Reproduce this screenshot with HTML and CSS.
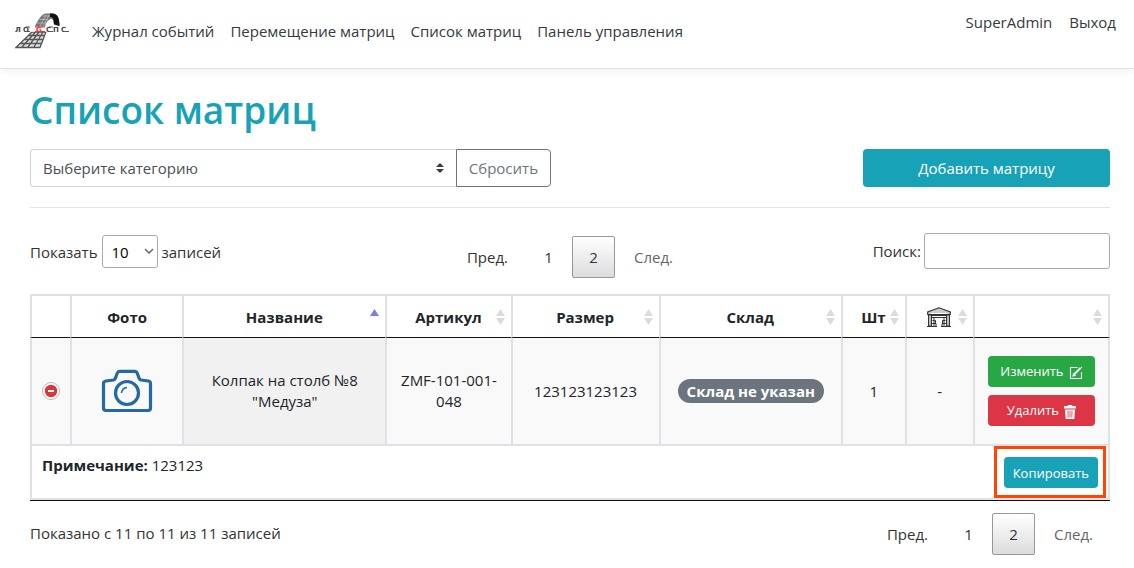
FILE: index.html
```html
<!DOCTYPE html>
<html lang="ru">
<head>
<meta charset="utf-8">
<meta name="viewport" content="width=device-width, initial-scale=1">
<title>Список матриц</title>
<link rel="stylesheet" href="styles.css">
</head>
<body>
<svg class="sprite" aria-hidden="true">
  <symbol id="sort" viewBox="0 0 9 16"><path d="M4.500 0 9 7H0zM0 9h9L4.500 16z" fill="#dcdcdc"/></symbol>
</svg>
<header class="navbar">
  <a class="logo" href="#" aria-label="Главная">
    <svg width="54" height="36" viewBox="0 0 54 36">
      <path d="M20 13C24 5 27 1 31 .5H38C43 1 44.500 6 44.500 13L39 12C38.500 7 37 5 35.500 6C32 8 31 10 30 14H20z" fill="#777"/>
      <path d="M35 .5H38C43 1 44.500 6 44.500 13L39 11C39 6 38 4 35 4z" fill="#111"/>
      <path d="M22 10H31M24.500 6.500H33M28 3H35M25 13 31 2M28.500 13 34 2" stroke="#ccc" stroke-width=".6" fill="none"/>
      <path d="M17 19H31L25 34H1z" fill="#ddd"/>
      <path d="M17 19H31L25 34.500H1zM14 22.500H29.500M10 26.500H28M5 30.500H26.500M20.500 19 7 34M24 19 13 34M28 19 19 34" stroke="#555" stroke-width="1.300" fill="none"/>
      <path d="M0 13.500H54V19H0z" fill="#fff" opacity=".75"/>
      <g class="logo-text"><text x="0" y="19">Л</text><text x="8" y="19">О</text><text class="logo-red" x="21" y="19">G</text><text x="31" y="19">С</text><text x="38" y="19">П</text><text x="46" y="19">С</text></g>
      <path d="M11 14h4M11 18.500h4M34 14h4M34 18.500h4M49 18.500h5" stroke="#555"/>
      <path d="M20 14h10M20 18.500h10" stroke="#e33" stroke-width="1.200"/>
    </svg>
  </a>
  <nav class="menu">
    <a href="#">Журнал событий</a>
    <a href="#">Перемещение матриц</a>
    <a href="#">Список матриц</a>
    <a href="#">Панель управления</a>
  </nav>
  <div class="account"><span>SuperAdmin</span><a href="#">Выход</a></div>
</header>

<main class="page">
  <h1 class="title">Список матриц</h1>
  <div class="toolbar">
    <div class="filter">
      <div class="select-wrap category">
        <select class="category-select" aria-label="Категория"><option>Выберите категорию</option></select>
        <svg class="category-arrow" width="8" height="10" viewBox="0 0 8 10"><path d="M4 0 8 4H0zM0 6h8L4 10z" fill="#343a40"/></svg>
      </div>
      <button class="btn-reset" type="button">Сбросить</button>
    </div>
    <button class="btn btn-add" type="button">Добавить матрицу</button>
  </div>

  <div class="controls">
    <div class="length">
      <label for="length">Показать</label>
      <div class="select-wrap">
        <select id="length" class="length-select"><option>10</option></select>
        <svg class="length-arrow" width="10" height="6" viewBox="0 0 10 6"><path d="M1 1l4 4 4-4" fill="none" stroke="#666" stroke-width="1.500"/></svg>
      </div>
      <label for="length">записей</label>
    </div>
    <nav class="pager" aria-label="Страницы сверху">
      <a href="#">Пред.</a><a href="#">1</a><a class="current" href="#">2</a><a class="disabled" href="#">След.</a>
    </nav>
    <div class="search"><label for="search">Поиск:</label><input id="search" type="search"></div>
  </div>

  <table class="grid">
    <colgroup><col class="c-toggle"><col class="c-photo"><col class="c-name"><col class="c-code"><col class="c-size"><col class="c-store"><col class="c-qty"><col class="c-garage"><col class="c-actions"></colgroup>
    <thead>
      <tr>
        <th></th>
        <th>Фото</th>
        <th class="sortable">Название<svg class="sort sort-asc" viewBox="0 0 9 16"><path d="M4.500 0 9 7H0z" fill="#7b7fdc"/></svg></th>
        <th class="sortable">Артикул<svg class="sort"><use href="#sort"/></svg></th>
        <th class="sortable">Размер<svg class="sort"><use href="#sort"/></svg></th>
        <th class="sortable">Склад<svg class="sort"><use href="#sort"/></svg></th>
        <th class="sortable">Шт<svg class="sort"><use href="#sort"/></svg></th>
        <th class="sortable">
          <svg class="garage" width="24" height="20" viewBox="0 0 24 20" fill="none" stroke="#333">
            <path d="M.7 7.500V5L12 .8 23.300 5v2.500H.7z" fill="#ccc" stroke-width="1.200"/>
            <path d="M4 6.500h16" stroke="#fff"/>
            <path d="M1.500 8h3v11h-3zM19.500 8h3v11h-3z" fill="#bbb"/>
            <path d="M0 19.500h10M14 19.500h10" stroke-width="1.200"/>
            <path d="M5 8.500h14M5 10.500h14M7 11v2M17 11v2M5.500 13.500h3V16M5 16.500h4V19M7 14v5M18.500 13.500h-3V16M19 16.500h-4V19M17 14v5"/>
          </svg>
          <svg class="sort"><use href="#sort"/></svg></th>
        <th class="sortable"><svg class="sort"><use href="#sort"/></svg></th>
      </tr>
    </thead>
    <tbody>
      <tr class="item">
        <td><button class="toggle" type="button" aria-label="Свернуть"><svg width="20" height="20" viewBox="0 0 20 20"><circle cx="10" cy="10" r="8.500" fill="#fff" stroke="#bbb"/><circle cx="10" cy="10" r="6.200" fill="#d93636"/><path d="M7 10h6" stroke="#fff" stroke-width="2"/></svg></button></td>
        <td>
          <svg class="camera" width="52" height="44" viewBox="0 0 52 44" fill="none" stroke="#2469a4" stroke-width="3.200" stroke-linejoin="round">
            <path d="M5 12 12.500 11Q14 10.500 14.500 9L16.300 4Q17 2.300 18.500 2.300H34Q35.500 2.300 36.200 4L38 9Q38.500 10.500 40 11L47.500 12Q49.500 12.300 49.500 14.500V39Q49.500 41.500 47 41.500H5Q2.500 41.500 2.500 39V14.500Q2.500 12.300 5 12z"/>
            <circle cx="26" cy="24" r="11.500"/>
            <path d="M20.500 24Q21 19 26 18.500" stroke-width="1.600"/>
          </svg>
        </td>
        <td class="sorted">Колпак на столб №8 "Медуза"</td>
        <td>ZMF-101-001-048</td>
        <td>123123123123</td>
        <td><span class="badge">Склад не указан</span></td>
        <td>1</td>
        <td>-</td>
        <td>
          <div class="actions">
            <button class="btn btn-small btn-edit" type="button">Изменить
              <svg width="14" height="14" viewBox="0 0 14 14" fill="none" stroke="#fff" stroke-width="1.100"><path d="M8.500 1.500H1.500v11h11V6"/><path d="M5 8.500 11.500 2" stroke-width="2"/><path d="M4 10l.5-2 1.500 1.500zM12 1l1 1" /></svg>
            </button>
            <button class="btn btn-small btn-delete" type="button">Удалить
              <svg width="12" height="14" viewBox="0 0 12 14"><path d="M4 0h4l.5 1H12v2.500H0V1h3.500zM1 4.500h10L10.300 14H1.700z" fill="#fff"/><path d="M4 5.500l.2 7M6 5.500v7M8 5.500l-.2 7" stroke="#dc3545" stroke-width=".8"/></svg>
            </button>
          </div>
        </td>
      </tr>
      <tr class="details">
        <td colspan="9">
          <div class="details-row">
            <p class="note"><b>Примечание:</b> 123123</p>
            <div class="highlight"><button class="btn btn-small btn-copy" type="button">Копировать</button></div>
          </div>
        </td>
      </tr>
    </tbody>
  </table>

  <footer class="summary">
    <p>Показано с 11 по 11 из 11 записей</p>
    <nav class="pager" aria-label="Страницы снизу">
      <a href="#">Пред.</a><a href="#">1</a><a class="current" href="#">2</a><a class="disabled" href="#">След.</a>
    </nav>
  </footer>
</main>
</body>
</html>
```
FILE: styles.css
```css
* { box-sizing: border-box; }
body {
  margin: 0;
  background: #fff;
  color: #212529;
  font: 15px/24px "Open Sans", "Noto Sans", sans-serif;
}
a { color: inherit; text-decoration: none; }
p { margin: 0; }
button, select, input { font: inherit; margin: 0; }
button { cursor: pointer; }
svg { display: block; }
.sprite { position: absolute; width: 0; height: 0; }

.navbar {
  display: flex;
  align-items: center;
  height: 69px;
  padding: 0 18px 6px 15px;
  border-bottom: 1px solid #dee2e6;
  box-shadow: 0 2px 8px rgba(0, 0, 0, .06);
  color: #343a40;
}
.logo { margin-right: 23px; }
.logo-text { font: bold 7px "DejaVu Sans", sans-serif; fill: #444; }
.logo-text .logo-red { fill: #e33; }
.menu { display: flex; gap: 16px; }
.account { display: flex; gap: 17px; margin-left: auto; align-self: flex-start; padding-top: 10px; }

.page { padding: 17px 24px 13px 30px; }
.title { margin: 0 0 15px; color: #17a2b8; font-size: 37px; line-height: 48px; font-weight: 600; }

.toolbar {
  display: flex;
  justify-content: space-between;
  padding-bottom: 20px;
  border-bottom: 1px solid #e5e5e5;
}
.filter { display: flex; width: 521px; }
.select-wrap { position: relative; }
.category { flex: 1; }
select { appearance: none; background: #fff; }
.category-select {
  width: 100%;
  height: 38px;
  padding: 0 28px 0 12px;
  border: 1px solid #ced4da;
  border-right: 0;
  border-radius: 4px 0 0 4px;
  color: #495057;
}
.category-arrow { position: absolute; right: 12px; top: 14px; pointer-events: none; }
.btn-reset {
  padding: 0 12px;
  border: 1px solid #6c757d;
  border-radius: 0 4px 4px 0;
  background: #fff;
  color: #6c757d;
}
.btn { border: 0; border-radius: 4px; color: #fff; }
.btn-add { width: 247px; height: 38px; background: #17a2b8; }

.controls {
  display: grid;
  grid-template-columns: 1fr auto 1fr;
  align-items: start;
  padding: 25px 0 16px;
  color: #333;
}
.length { display: flex; align-items: center; gap: 4px; padding-top: 2px; }
.length-select {
  width: 56px;
  height: 33px;
  padding: 0 9px;
  border: 1px solid #aaa;
  border-radius: 3px;
  color: #000;
}
.length-arrow { position: absolute; right: 4px; top: 13px; pointer-events: none; }
.pager { display: flex; gap: 2px; color: #333; padding-top: 3px; }
.pager a { min-width: 43px; padding: 8px 16px; border: 1px solid transparent; border-radius: 2px; text-align: center; }
.pager .current { border-color: #979797; background: linear-gradient(#fff, #dcdcdc); }
.pager .disabled { color: #666; }
.search { display: flex; align-items: center; justify-content: flex-end; gap: 3px; }
.search input { width: 186px; height: 36px; padding: 5px; border: 1px solid #aaa; border-radius: 3px; background: #fff; }

.grid {
  width: 100%;
  table-layout: fixed;
  border-collapse: separate;
  border-spacing: 0;
  border-bottom: 1px solid #111;
}
.c-toggle { width: 3.7%; }
.c-photo { width: 10.4%; }
.c-name { width: 18.8%; }
.c-code { width: 11.6%; }
.c-size { width: 13.7%; }
.c-store { width: 16.9%; }
.c-qty { width: 5.9%; }
.c-garage { width: 6.3%; }
.c-actions { width: 12.7%; }
.grid th, .grid td { border-left: 2px solid #dee2e6; }
.grid th:last-child, .grid td:last-child { border-right: 2px solid #dee2e6; }
.grid th {
  height: 44px;
  padding: 0 10px;
  border-top: 2px solid #dee2e6;
  border-bottom: 1px solid #111;
  font-weight: 700;
}
.grid .sortable { position: relative; padding: 0 18px 0 17px; }
.sort { position: absolute; right: 6px; top: 13px; width: 9px; height: 16px; }
.garage { margin: 0 auto; }
.grid td { border-bottom: 2px solid #dee2e6; }
.item td { height: 108px; padding: 0 10px; background: #f9f9f9; text-align: center; line-height: 21px; }
.item .sorted { padding: 0 20px; background: #f1f1f1; }
.toggle { display: block; margin: 0 auto 0 -1px; padding: 0; border: 0; background: none; }
.camera { margin: 0 auto; }
.badge {
  display: inline-block;
  padding: 0 9px;
  border-radius: 12px;
  background: #6c757d;
  color: #fff;
  font-weight: 700;
  line-height: 24px;
  white-space: nowrap;
}
.actions { display: grid; gap: 8px; padding: 0 3px; }
.btn-small { display: flex; align-items: center; justify-content: center; gap: 5px; height: 31px; padding: 0 9px; font-size: 13px; }
.btn-small svg { margin-top: 3px; }
.btn-edit { background: #28a745; }
.btn-delete { background: #dc3545; }
.btn-copy { background: #17a2b8; }
.details td { padding: 0 2px 0 10px; }
.details-row { display: flex; justify-content: space-between; align-items: flex-start; }
.note { padding-top: 7px; }
.highlight { padding: 8px 5px 7px 7px; border: 3px solid #ff4500; }

.summary { display: flex; justify-content: space-between; padding-top: 9px; color: #333; }
.summary p { padding-top: 11px; }
```
